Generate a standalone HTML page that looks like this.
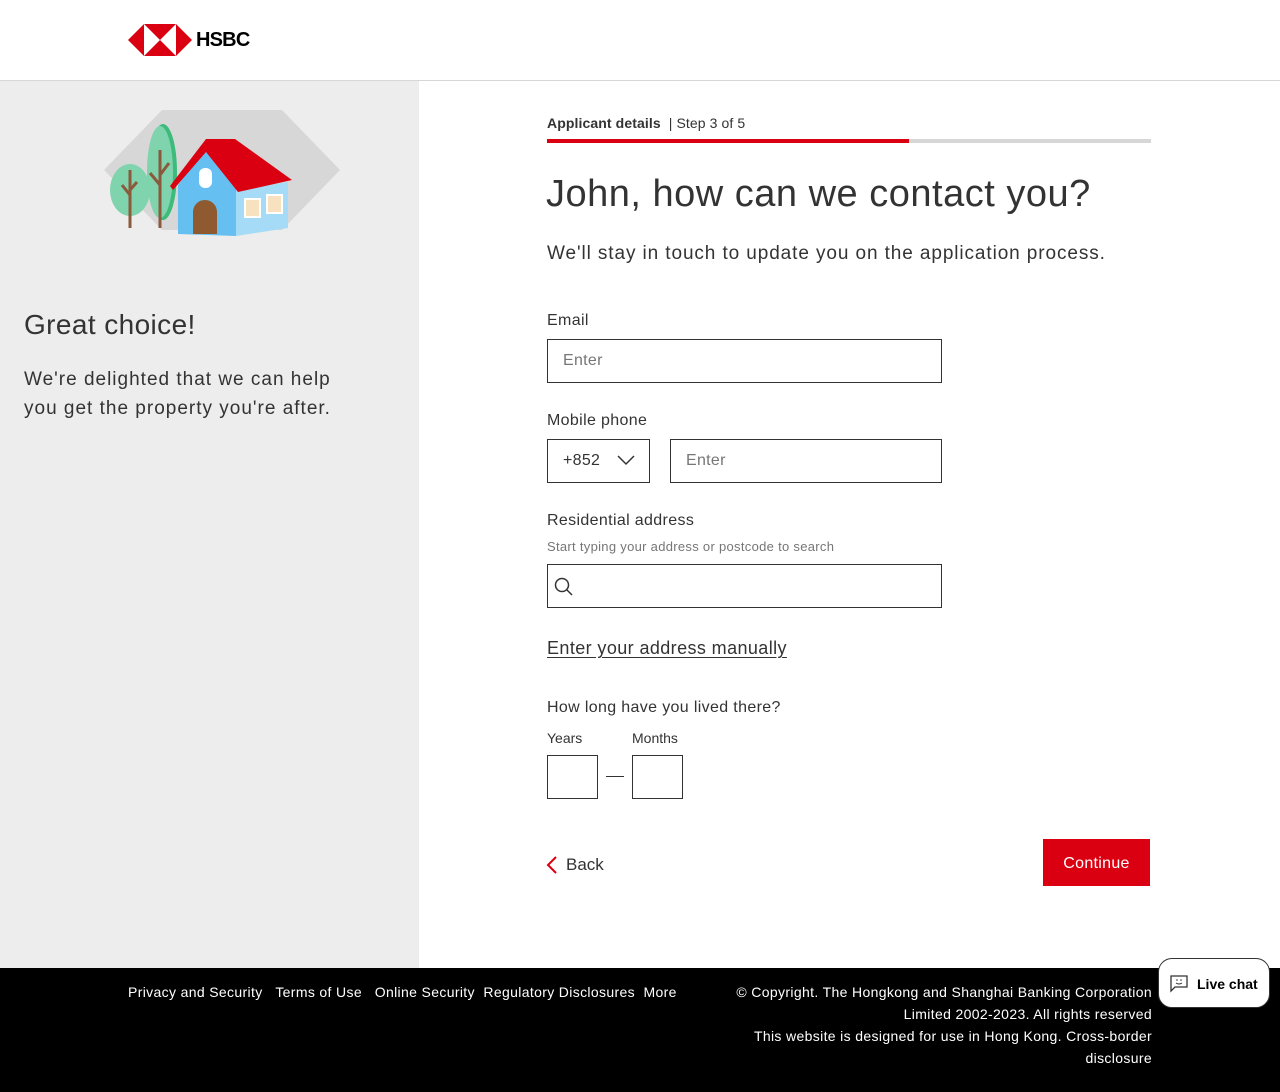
<!DOCTYPE html>
<html><head><meta charset="utf-8"><style>
*{box-sizing:border-box;margin:0;padding:0}
body{width:1280px;height:1092px;font-family:"Liberation Sans",sans-serif;color:#333;background:#fff;position:relative;overflow:hidden}
.hdr{height:81px;border-bottom:1px solid #d7d7d7;position:relative}
.left{position:absolute;left:0;top:81px;width:419px;height:887px;background:#ededed}
.abs{position:absolute}
.inp{position:absolute;border:1px solid #333;background:#fff;font-size:16px;color:#767676;padding-left:15px;line-height:42px;height:44px;letter-spacing:0.3px}
.lbl{position:absolute;font-size:16px;color:#333;letter-spacing:0.35px}
.foot{position:absolute;left:0;top:968px;width:1280px;height:124px;background:#000;color:#fff;font-size:14px;letter-spacing:0.35px}
</style></head><body>
<div class="hdr">
<svg class="abs" style="left:128px;top:24px" width="64" height="32" viewBox="0 0 64 32">
<polygon points="16,0 48,0 64,16 48,32 16,32 0,16" fill="#db0011"/>
<polygon points="16,0 32,16 16,32" fill="#fff"/>
<polygon points="48,0 32,16 48,32" fill="#fff"/>
</svg>
<div class="abs" style="left:196px;top:29px;font-size:20px;font-weight:bold;color:#000;letter-spacing:-0.8px">HSBC</div>
</div>
<div class="left">
<svg class="abs" style="left:100px;top:22px" width="245" height="140" viewBox="100 103 245 140">
<polygon points="162,110 282,110 340,170 282,230 162,230 104,170" fill="#d7d7d7"/>
<ellipse cx="163" cy="172" rx="14" ry="48" fill="#3dbb7a"/>
<ellipse cx="160" cy="172" rx="13" ry="46" fill="#7fd3ad"/>
<path d="M160 150V228M160 185l-10-12M160 175l9-12" stroke="#8b5a3c" stroke-width="3" fill="none"/>
<ellipse cx="130" cy="190" rx="20" ry="26" fill="#7fd3ad"/>
<path d="M130 170V228M130 195l-8-10M130 190l7-8" stroke="#8b5a3c" stroke-width="3" fill="none"/>
<polygon points="178,185 206,148 236,185 236,236 178,234" fill="#65bff0"/>
<polygon points="236,190 288,182 288,228 236,236" fill="#a5dbf7"/>
<polygon points="170,186 206,139 235,139 292,180 238,192 206,152 173,190" fill="#db0011"/>
<rect x="199" y="168" width="13" height="20" rx="6" fill="#fff"/>
<path d="M193 234v-22a11 11 0 0 1 24 0v22z" fill="#8f5a30"/>
<rect x="244" y="198" width="17" height="20" fill="#fff"/><rect x="246" y="200" width="13" height="16" fill="#f7e1bf"/>
<rect x="266" y="194" width="17" height="20" fill="#fff"/><rect x="268" y="196" width="13" height="16" fill="#f7e1bf"/>
</svg>
<div class="abs" style="left:24px;top:228px;font-size:28px;color:#333;letter-spacing:0.4px">Great choice!</div>
<div class="abs" style="left:24px;top:284px;font-size:19px;line-height:29px;color:#333;letter-spacing:1px">We're delighted that we can help<br>you get the property you're after.</div>
</div>
<div class="abs" style="left:547px;top:115px;font-size:14px;color:#333;letter-spacing:0.1px"><b>Applicant details</b> &nbsp;| Step 3 of 5</div>
<div class="abs" style="left:547px;top:139px;width:604px;height:4px;background:#d7d7d7"></div>
<div class="abs" style="left:547px;top:139px;width:362px;height:4px;background:#db0011"></div>
<div class="abs" style="left:546px;top:173px;font-size:38px;color:#333;letter-spacing:0.5px">John, how can we contact you?</div>
<div class="abs" style="left:547px;top:243px;font-size:19px;color:#333;letter-spacing:0.9px">We'll stay in touch to update you on the application process.</div>
<div class="lbl" style="left:547px;top:312px">Email</div>
<div class="inp" style="left:547px;top:339px;width:395px">Enter</div>
<div class="lbl" style="left:547px;top:412px">Mobile phone</div>
<div class="inp" style="left:547px;top:439px;width:103px;color:#333">+852
<svg class="abs" style="left:69px;top:15px" width="18" height="11"><path d="M1 1l8 8 8-8" stroke="#333" stroke-width="1.5" fill="none"/></svg></div>
<div class="inp" style="left:670px;top:439px;width:272px">Enter</div>
<div class="lbl" style="left:547px;top:512px">Residential address</div>
<div class="abs" style="left:547px;top:539px;font-size:13px;color:#767676;letter-spacing:0.3px">Start typing your address or postcode to search</div>
<div class="inp" style="left:547px;top:564px;width:395px">
<svg class="abs" style="left:6px;top:12px" width="20" height="20"><circle cx="8" cy="8" r="6.5" stroke="#333" stroke-width="1.5" fill="none"/><path d="M13 13l5 5" stroke="#333" stroke-width="1.5"/></svg></div>
<div class="abs" style="left:547px;top:638px;font-size:18px;color:#333;text-decoration:underline;text-underline-offset:3px;letter-spacing:0.4px">Enter your address manually</div>
<div class="lbl" style="left:547px;top:699px">How long have you lived there?</div>
<div class="abs" style="left:547px;top:730px;font-size:14px">Years</div>
<div class="abs" style="left:632px;top:730px;font-size:14px">Months</div>
<div class="inp" style="left:547px;top:755px;width:51px"></div>
<div class="abs" style="left:606px;top:776px;width:18px;height:1px;background:#333"></div>
<div class="inp" style="left:632px;top:755px;width:51px"></div>
<svg class="abs" style="left:546px;top:856px" width="12" height="18"><path d="M10 1L2 9l8 8" stroke="#db0011" stroke-width="2" fill="none"/></svg>
<div class="abs" style="left:566px;top:855px;font-size:17px">Back</div>
<div class="abs" style="left:1043px;top:839px;width:107px;height:47px;background:#db0011;color:#fff;font-size:16px;text-align:center;line-height:49px;letter-spacing:0.3px">Continue</div>
<div class="foot">
<div class="abs" style="left:128px;top:16px">Privacy and Security &nbsp;&nbsp;Terms of Use &nbsp;&nbsp;Online Security &nbsp;Regulatory Disclosures &nbsp;More</div>
<div class="abs" style="right:128px;top:13px;text-align:right;line-height:22px">© Copyright. The Hongkong and Shanghai Banking Corporation<br>Limited 2002-2023. All rights reserved<br>This website is designed for use in Hong Kong. Cross-border<br>disclosure</div>
</div>
<div class="abs" style="left:1158px;top:958px;width:112px;height:50px;background:#fff;border:1px solid #333;border-radius:14px;font-size:14px;color:#000">
<svg class="abs" style="left:11px;top:16px" width="18" height="18"><path d="M1 1h16v11H5l-4 4z" stroke="#333" stroke-width="1.3" fill="none"/><circle cx="7" cy="5" r=".8" fill="#333"/><circle cx="11" cy="5" r=".8" fill="#333"/><path d="M6 8q3 2 6 0" stroke="#333" fill="none"/></svg>
<div class="abs" style="left:38px;top:17px;font-weight:bold">Live chat</div></div>
</body></html>
